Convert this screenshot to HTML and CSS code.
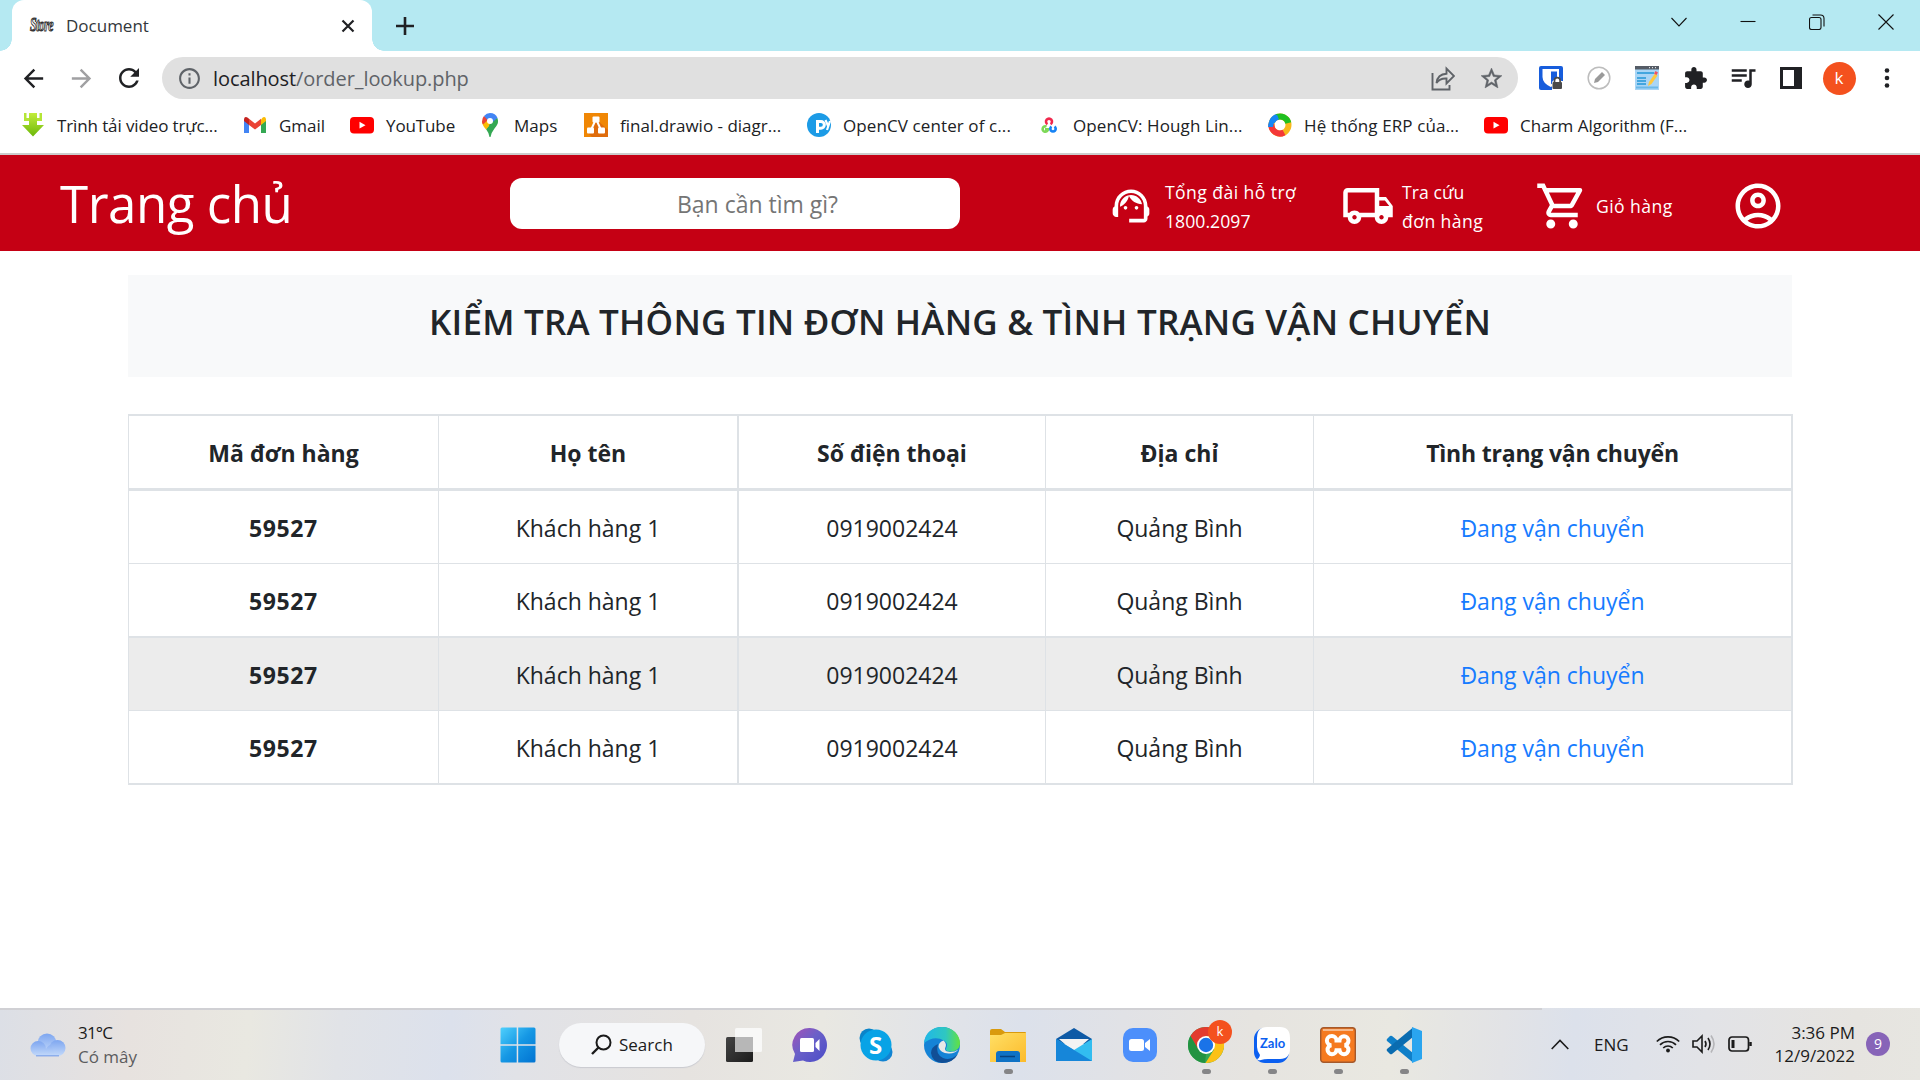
FILE: index.html
```html
<!DOCTYPE html>
<html lang="vi">
<head>
<meta charset="utf-8">
<title>Document</title>
<link rel="stylesheet" href="styles.css">
</head>
<body>
<header class="tabstrip">
  <div class="tab">
    <span class="favicon">Store</span>
    <span class="tab-title">Document</span>
    <svg class="tab-close" width="14" height="14" viewBox="0 0 14 14"><path d="M1.5 1.5l11 11m0-11l-11 11" stroke="#202124" stroke-width="2.2"/></svg>
  </div>
  <svg class="new-tab" width="20" height="20" viewBox="0 0 20 20"><path d="M10 1v18M1 10h18" stroke="#202124" stroke-width="2.6"/></svg>
  <div class="window-controls">
    <svg viewBox="0 0 16 16"><path d="M.5 4l7.500 8 7.500-8" /></svg>
    <svg viewBox="0 0 16 16"><path d="M.5 7.500h15"/></svg>
    <svg viewBox="0 0 16 16"><rect x=".5" y="3.500" width="11.500" height="12" rx="2"/><path d="M3.500 1h8q3.500 0 3.500 3.500v8"/></svg>
    <svg viewBox="0 0 16 16"><path d="M.5.5l15 15m0-15l-15 15"/></svg>
  </div>
</header>

<nav class="toolbar">
  <span class="tool"><svg width="29" height="29" viewBox="0 0 24 24"><path d="M20 11H7.830l5.590-5.590L12 4l-8 8 8 8 1.410-1.410L7.830 13H20v-2z" fill="#202124"/></svg></span>
  <span class="tool"><svg width="29" height="29" viewBox="0 0 24 24"><path d="M4 11h12.170l-5.590-5.590L12 4l8 8-8 8-1.410-1.410L16.170 13H4v-2z" fill="#a0a0a2"/></svg></span>
  <span class="tool"><svg width="30" height="30" viewBox="0 0 24 24"><path d="M17.650 6.350C16.200 4.900 14.210 4 12 4c-4.420 0-7.990 3.580-7.990 8s3.570 8 7.990 8c3.730 0 6.840-2.550 7.730-6h-2.080c-.82 2.330-3.040 4-5.650 4-3.310 0-6-2.690-6-6s2.690-6 6-6c1.660 0 3.140.69 4.220 1.780L13 11h7V4l-2.350 2.350z" fill="#202124"/></svg></span>
  <div class="address">
    <svg class="info" width="25" height="25" viewBox="0 0 24 24"><path d="M11 7h2v2h-2zm0 4h2v6h-2zm1-9C6.480 2 2 6.480 2 12s4.480 10 10 10 10-4.480 10-10S17.520 2 12 2zm0 18c-4.410 0-8-3.590-8-8s3.590-8 8-8 8 3.590 8 8-3.590 8-8 8z" fill="#5f6368"/></svg>
    <span class="url"><b>localhost</b>/order_lookup.php</span>
    <span class="tool"><svg width="24" height="26" viewBox="0 0 24 26" fill="none" stroke="#5f6368" stroke-width="1.900"><path d="M1.500 8v16.500h17V20"/><path d="M5.500 18q1-9 10-9.300V3.500L23 11l-7.500 7.500v-5Q9 13 5.500 18z"/></svg></span>
    <span class="tool"><svg width="25" height="25" viewBox="0 0 24 24"><path d="M22 9.240l-7.190-.62L12 2 9.190 8.630 2 9.240l5.460 4.730L5.820 21 12 17.270 18.180 21l-1.630-7.030L22 9.240zM12 15.400l-3.760 2.270 1-4.280-3.320-2.880 4.380-.38L12 6.100l1.710 4.040 4.380.38-3.320 2.880 1 4.280L12 15.400z" fill="#5f6368" stroke="#5f6368" stroke-width=".5"/></svg></span>
  </div>
  <div class="extensions">
    <span class="tool"><svg width="24" height="24" viewBox="0 0 24 24"><rect width="24" height="24" rx="2" fill="#175ddc"/><path d="M3.500 3H20v8q0 6-8.200 10Q3.500 17 3.500 11z" fill="#fff"/><path d="M12 5.500h6V11q0 4-6 7.300z" fill="#175ddc"/><path d="M13 24v-8l4.500-5 5 4H24v9z" fill="#fff"/><rect x="13.500" y="16" width="9.500" height="7" rx="1" fill="#4a4a4a"/><path d="M15.500 16v-1.500a2.800 2.800 0 0 1 5.600 0V16" stroke="#4a4a4a" stroke-width="1.700" fill="none"/></svg></span>
    <span class="tool"><svg width="24" height="24" viewBox="0 0 24 24"><circle cx="12" cy="12" r="10.800" fill="#fff" stroke="#bdbdbd" stroke-width="1.500"/><path d="M7 17l1-4 7-7 3 3-7 7z" fill="#9a9a9a"/></svg></span>
    <span class="tool"><svg width="24" height="24" viewBox="0 0 24 24"><path d="M0 0h24v24H0z" fill="#a9d5f5"/><path d="M0 0h24v3.500H0z" fill="#555c66"/><path d="M14 1.700h1m2 0h1m2 0h1" stroke="#fff"/><path d="M2 7h17M2 12h9M2 15h9M2 18h9" stroke="#2196d8" stroke-width="1.500"/><path d="M1 21.500h22" stroke="#6ab9e8" stroke-width="2"/><path d="M13 20l1-4 6-8.500 2.500 2-6 8.500z" fill="#ffc83d"/><path d="M19 7.500l1.500-2.500 2.500 1.500-1.500 2.500z" fill="#ef5362"/></svg></span>
    <span class="tool"><svg width="25" height="25" viewBox="0 0 24 24"><path d="M20.500 11H19V7c0-1.100-.9-2-2-2h-4V3.500C13 2.120 11.880 1 10.500 1S8 2.120 8 3.500V5H4c-1.100 0-1.990.9-1.990 2v3.800H3.500c1.490 0 2.700 1.210 2.700 2.700s-1.210 2.700-2.700 2.700H2V20c0 1.100.9 2 2 2h3.800v-1.500c0-1.490 1.210-2.700 2.700-2.700 1.490 0 2.700 1.210 2.700 2.700V22H17c1.100 0 2-.9 2-2v-4h1.500c1.380 0 2.500-1.120 2.500-2.500S21.880 11 20.500 11z" fill="#202124"/></svg></span>
    <span class="tool"><svg width="30" height="30" viewBox="0 0 24 24"><path d="M15 5H3v2h12V5zm0 4H3v2h12V9zM3 15h8v-2H3v2zM17 5v9.180c-.31-.11-.65-.18-1-.18-1.660 0-3 1.340-3 3s1.340 3 3 3 3-1.340 3-3V7h3V5h-5z" fill="#202124"/></svg></span>
    <span class="tool"><svg width="22" height="22" viewBox="0 0 22 22"><path fill-rule="evenodd" d="M0 0h22v22H0zM3 3v16h11V3z" fill="#202124"/></svg></span>
    <span class="tool"><span class="avatar">k</span></span>
    <span class="tool"><svg width="6" height="20" viewBox="0 0 6 20" fill="#202124"><circle cx="3" cy="2.500" r="2.300"/><circle cx="3" cy="10" r="2.300"/><circle cx="3" cy="17.500" r="2.300"/></svg></span>
  </div>
</nav>

<nav class="bookmarks">
  <a><svg viewBox="0 0 24 24"><defs><linearGradient id="dl" x2="0" y2="1"><stop stop-color="#c2ec3b"/><stop offset="1" stop-color="#6cb80a"/></linearGradient></defs><path d="M8 0h8v12h7L12 23.500 1 12h7z" fill="url(#dl)"/><path d="M3 0h2.500v5H8v3H3zM21 0h-2.500v5H16v3h5z" fill="#b4e636"/></svg><span class="tight">Trình tải video trực...</span></a>
  <a><svg viewBox="0 0 24 24"><path d="M1 6v14h5V11z" fill="#4285f4"/><path d="M23 6v14h-5V11z" fill="#34a853"/><path d="M18 6.500L20 4.300Q23 3 23 6.500V8l-5 4z" fill="#fbbc04"/><path d="M6 12V5.800l6 4.700 6-4.700V12l-6 4.600z" fill="#ea4335"/><path d="M1 8V6.500Q1 3 4 4.300L6 5.800V12z" fill="#c5221f"/></svg><span>Gmail</span></a>
  <a><svg viewBox="0 0 24 24"><rect y="4" width="24" height="16.500" rx="4" fill="#f00"/><path d="M9.500 8.800l6 3.400-6 3.400z" fill="#fff"/></svg><span class="tight">YouTube</span></a>
  <a><svg viewBox="0 0 24 24"><path d="M20 8q0 3.500-3.500 7.500Q13 20 12.500 24h-1Q11 20 8 16L18 4z" fill="#34a853"/><path d="M4 8.500q0 3.500 4 8l7-8-5-5z" fill="#fbbc04"/><path d="M6 3q-2 2-2 5.500 0 1.500 1 3L11 6z" fill="#ea4335"/><path d="M6 3q2.500-3 6-3 5.500 0 7.500 5L14 11 9.500 7z" fill="#4285f4"/><path d="M19.500 5q1 3-.3 6L13 18l-2-6z" fill="#34a853"/><circle cx="12" cy="8" r="3" fill="#fff"/></svg><span>Maps</span></a>
  <a><svg viewBox="0 0 24 24"><path d="M0 0h24v24H0z" fill="#f08705"/><path d="M12 6l12 11v7H8l-4-4z" fill="#df6c0c"/><path d="M12 6L7 17m5-11l5 11" stroke="#fff" stroke-width="2"/><rect x="8.500" y="3.500" width="7" height="6" rx="1" fill="#fff"/><rect x="3" y="14.500" width="7" height="6" rx="1" fill="#fff"/><rect x="14" y="14.500" width="7" height="6" rx="1" fill="#fff"/></svg><span>final.drawio - diagr...</span></a>
  <a><svg viewBox="0 0 24 24"><circle cx="12" cy="12" r="12" fill="#1c9be6"/><path d="M10.500 20V8.500H14a3.300 3.300 0 0 1 0 6.700h-3" fill="none" stroke="#fff" stroke-width="3"/><path d="M18.500 7l3 7M23 8l-3 9" stroke="#fff" stroke-width="2.200"/></svg><span class="loose">OpenCV center of c...</span></a>
  <a><svg viewBox="0 0 24 24" fill="none" stroke-width="2.600"><path d="M10.500 11.200a3 3 0 1 1 3 0" stroke="#f0274c"/><path d="M9.500 13.600a2.700 2.700 0 1 0 1.500 2.700H8" stroke="#7dd957"/><path d="M14.500 13.600a2.700 2.700 0 1 0 3 0" stroke="#1683f5"/></svg><span class="loose">OpenCV: Hough Lin...</span></a>
  <a><svg viewBox="0 0 24 24" fill="none" stroke-width="6"><circle cx="12" cy="12" r="8.500" stroke="#f7b81b"/><path d="M4 9a8.500 8.500 0 0 1 6-5.300" stroke="#1687f5"/><path d="M9 4a8.500 8.500 0 0 1 11.300 6" stroke="#1fc020"/><path d="M3.500 11A8.500 8.500 0 0 0 16 19.500" stroke="#f43838"/><path d="M2.500 14q0-7 7.500-10" stroke="#1687f5" stroke-width="5"/></svg><span class="loose">Hệ thống ERP của...</span></a>
  <a><svg viewBox="0 0 24 24"><rect y="4" width="24" height="16.500" rx="4" fill="#f00"/><path d="M9.500 8.800l6 3.400-6 3.400z" fill="#fff"/></svg><span>Charm Algorithm (F...</span></a>
</nav>

<section class="site-header">
  <a class="brand">Trang chủ</a>
  <div class="search">Bạn cần tìm gì?</div>
  <a class="action support"><svg width="44" height="44" viewBox="0 0 24 24"><path d="M21 12.220C21 6.730 16.740 3 12 3c-4.690 0-9 3.650-9 9.280-.6.34-1 .98-1 1.720v2c0 1.100.9 2 2 2h1v-6.100c0-3.870 3.130-7 7-7s7 3.130 7 7V19h-8v2h8c1.100 0 2-.9 2-2v-1.220c.59-.31 1-.92 1-1.640v-2.300c0-.7-.41-1.310-1-1.620z"/><circle cx="9" cy="13" r="1"/><circle cx="15" cy="13" r="1"/><path d="M18 11.030C17.520 8.180 15.040 6 12.050 6c-3.030 0-6.290 2.510-6.030 6.450 2.470-1.010 4.330-3.210 4.860-5.890 1.310 2.630 4 4.440 7.120 4.470z"/></svg><p><span class="wide">Tổng đài hỗ trợ</span><br><span class="digits">1800.2097</span></p></a>
  <a class="action lookup"><svg width="54" height="54" viewBox="0 0 24 24"><path d="M20 8h-3V4H3c-1.100 0-2 .9-2 2v11h2c0 1.660 1.340 3 3 3s3-1.340 3-3h6c0 1.660 1.340 3 3 3s3-1.340 3-3h2v-5l-3-4zm-.5 1.500l1.960 2.500H17V9.500h2.500zM6 18c-.55 0-1-.45-1-1s.45-1 1-1 1 .45 1 1-.45 1-1 1zm2.220-3c-.55-.61-1.330-1-2.220-1s-1.670.39-2.220 1H3V6h12v9H8.220zM18 18c-.55 0-1-.45-1-1s.45-1 1-1 1 .45 1 1-.45 1-1 1z"/></svg><p><span class="digits">Tra cứu</span><br><span class="wide">đơn hàng</span></p></a>
  <a class="action cart"><svg width="54" height="54" viewBox="0 0 24 24"><path d="M15.550 13c.75 0 1.410-.41 1.750-1.030l3.580-6.490c.37-.66-.11-1.480-.87-1.480H5.210l-.94-2H1v2h2l3.600 7.590-1.350 2.440C4.520 15.370 5.480 17 7 17h12v-2H7l1.100-2h7.450zM6.160 6h12.150l-2.760 5H8.530L6.160 6zM7 18c-1.100 0-1.990.9-1.990 2S5.900 22 7 22s2-.9 2-2-.9-2-2-2zm10 0c-1.100 0-1.990.9-1.990 2s.89 2 1.990 2 2-.9 2-2-.9-2-2-2z"/></svg><p><span class="wide">Giỏ hàng</span></p></a>
  <a class="action account"><svg width="54" height="54" viewBox="0 0 24 24"><path d="M12 2C6.480 2 2 6.480 2 12s4.480 10 10 10 10-4.480 10-10S17.520 2 12 2zM7.350 18.500C8.660 17.560 10.260 17 12 17s3.340.56 4.650 1.500C15.340 19.440 13.740 20 12 20s-3.340-.56-4.650-1.500zm10.790-1.380C16.450 15.800 14.320 15 12 15s-4.450.8-6.140 2.120C4.700 15.730 4 13.950 4 12c0-4.420 3.580-8 8-8s8 3.580 8 8c0 1.950-.7 3.730-1.860 5.120zM12 6c-1.930 0-3.500 1.570-3.500 3.500S10.070 13 12 13s3.500-1.570 3.500-3.500S13.930 6 12 6zm0 5c-.83 0-1.500-.67-1.500-1.500S11.170 8 12 8s1.500.67 1.500 1.500S12.830 11 12 11z"/></svg></a>
</section>

<main class="content">
  <div class="heading"><h1>KIỂM TRA THÔNG TIN ĐƠN HÀNG &amp; TÌNH TRẠNG VẬN CHUYỂN</h1></div>
  <table class="orders">
    <colgroup><col class="col-code"><col class="col-name"><col class="col-phone"><col class="col-address"><col class="col-status"></colgroup>
    <thead>
      <tr><th>Mã đơn hàng</th><th>Họ tên</th><th>Số điện thoại</th><th>Địa chỉ</th><th>Tình trạng vận chuyển</th></tr>
    </thead>
    <tbody>
      <tr><th>59527</th><td>Khách hàng 1</td><td>0919002424</td><td>Quảng Bình</td><td><a>Đang vận chuyển</a></td></tr>
      <tr><th>59527</th><td>Khách hàng 1</td><td>0919002424</td><td>Quảng Bình</td><td><a>Đang vận chuyển</a></td></tr>
      <tr class="hovered"><th>59527</th><td>Khách hàng 1</td><td>0919002424</td><td>Quảng Bình</td><td><a>Đang vận chuyển</a></td></tr>
      <tr><th>59527</th><td>Khách hàng 1</td><td>0919002424</td><td>Quảng Bình</td><td><a>Đang vận chuyển</a></td></tr>
    </tbody>
  </table>
</main>

<footer class="taskbar">
  <div class="weather">
    <svg width="36" height="24" viewBox="0 0 36 24"><defs><linearGradient id="cl" x2="0" y2="1"><stop stop-color="#7ea6f0"/><stop offset="1" stop-color="#c3d9fa"/></linearGradient></defs><circle cx="17" cy="10" r="9.500" fill="url(#cl)"/><circle cx="27.500" cy="15" r="8" fill="url(#cl)"/><path d="M8 8a8 8 0 0 1 8 8q2-4 5-4l5 11H8A7.500 7.500 0 0 1 8 8z" fill="url(#cl)"/><path d="M6 22.800h23" stroke="#7fa4ea" stroke-width="1.200"/></svg>
    <p><span class="temperature">31°C</span><br><span class="muted">Có mây</span></p>
  </div>
  <div class="apps">
    <span class="app"><svg width="36" height="36" viewBox="0 0 36 36"><defs><linearGradient id="wn" x2="1" y2="1"><stop stop-color="#4fd0fd"/><stop offset=".5" stop-color="#1597e4"/><stop offset="1" stop-color="#0173d2"/></linearGradient></defs><path d="M2 .5h14.700v16.800H.5V2Q.5.500 2 .5zM18.200.5H34q1.500 0 1.500 1.500v15.300H18.200zM.5 18.800h16.200v16.700H2Q.5 35.500.5 34zM18.200 18.800h17.300V34q0 1.500-1.500 1.500H18.200z" fill="url(#wn)"/></svg></span>
    <div class="task-search"><svg width="21" height="21" viewBox="0 0 21 21" fill="none" stroke="#1b1b1b" stroke-width="2"><circle cx="12.500" cy="8.500" r="7"/><path d="M7.500 13.500L1 20" stroke-width="2.400"/></svg><span>Search</span></div>
    <span class="app"><svg width="36" height="36" viewBox="0 0 36 36"><defs><linearGradient id="tv" x2="1" y2="1"><stop stop-color="#444"/><stop offset="1" stop-color="#1c1c1c"/></linearGradient></defs><rect y="10" width="27" height="25" rx="1.500" fill="url(#tv)"/><rect x="9" y="1" width="27" height="24" rx="1.500" fill="#fafafa" fill-opacity=".9"/><path d="M9 10h18v15H9z" fill="#b7b7b7"/></svg></span>
    <span class="app"><svg width="36" height="36" viewBox="0 0 36 36"><defs><linearGradient id="ch" x2="1" y2="1"><stop stop-color="#a552b8"/><stop offset=".45" stop-color="#6a60c8"/><stop offset="1" stop-color="#4a4cc8"/></linearGradient></defs><path d="M18 1a17 17 0 1 1-7 32.500L1 35l2-8A17 17 0 0 1 18 1z" fill="url(#ch)"/><rect x="8" y="11" width="14" height="14" rx="1.500" fill="#fff"/><path d="M23.500 16l4-4v12l-4-4z" fill="#fff"/></svg></span>
    <span class="app"><svg width="36" height="36" viewBox="0 0 36 36"><circle cx="11" cy="11" r="9.500" fill="#0a84c9"/><circle cx="25" cy="25" r="9.500" fill="#1183d2"/><circle cx="18" cy="18" r="15.500" fill="#08a3e6"/></svg><b class="skype-letter">S</b></span>
    <span class="app"><svg width="36" height="36" viewBox="0 0 36 36"><defs><linearGradient id="eg" x2="1"><stop stop-color="#20b7e8"/><stop offset=".6" stop-color="#2fc7c1"/><stop offset="1" stop-color="#62e23f"/></linearGradient></defs><circle cx="18" cy="18" r="18" fill="#1583d6"/><path d="M0 16C1 6 8 0 18 0c11 0 18 8 18 16 0 6-5 9-10 8.500-3 0-5-1.500-4-3q3-5-2-8Q10 8 0 16z" fill="url(#eg)"/><path d="M14 17q-3 10 5 14 8 3 15-4-5 9-16 9-10-1-11-10 0-6 7-9z" fill="#114f96"/><path d="M14.500 20q0-5 5-6.500 4 3.500 1.500 8-.5 3 5 3.500 5 0 8.500-2.500-4 4.500-10 4-8-.5-10-6.500z" fill="#e8e8e7"/></svg></span>
    <span class="app running"><svg width="36" height="36" viewBox="0 0 36 36"><defs><linearGradient id="fo" x2="1" y2="1"><stop stop-color="#ffdf65"/><stop offset="1" stop-color="#fcbb2b"/></linearGradient></defs><path d="M0 4q0-2 2-2h9l4 3h20q1 0 1 1v8H0z" fill="#d99a0d"/><path d="M0 8h11l4-2h21v29H0z" fill="url(#fo)"/><path d="M6 35V27q0-3 3-3h18q3 0 3 3v8z" fill="#0f72c5"/><path d="M10 29.500h15" stroke="#07427e" stroke-width="1.500"/></svg></span>
    <span class="app"><svg width="36" height="36" viewBox="0 0 36 36"><path d="M0 12L18 1l18 11v5H0z" fill="#0e5aa6"/><path d="M3 12h30L18 25z" fill="#f3f3f3"/><path d="M0 12l18 11 18-11v22H0z" fill="#32bdf0"/><path d="M0 12l36 22H0z" fill="#1686d9"/></svg></span>
    <span class="app"><svg width="36" height="36" viewBox="0 0 36 36"><rect x="1" y="1" width="34" height="34" rx="10" fill="#4c8ffb"/><rect x="7" y="12" width="15" height="12" rx="2.500" fill="#fff"/><path d="M23 16l5-4v12l-5-4z" fill="#fff"/></svg></span>
    <span class="app running"><svg width="36" height="36" viewBox="0 0 36 36"><circle cx="18" cy="18" r="18" fill="#34a853"/><path d="M2.400 9A18 18 0 0 1 33.600 9H18l-8 13z" fill="#e33b2e"/><path d="M2.400 9L10 22l8 5-1 9A18 18 0 0 1 2.400 9z" fill="#229342"/><path d="M33.600 9H18l8 13.500L17.500 36A18 18 0 0 0 33.600 9z" fill="#fbc116"/><circle cx="18" cy="18" r="9" fill="#fff"/><circle cx="18" cy="18" r="7.200" fill="#1a73e8"/></svg><span class="profile-badge">k</span></span>
    <span class="app running"><svg width="36" height="36" viewBox="0 0 36 36"><rect y="1" width="35" height="35" rx="11" fill="#0b5ff0"/><path d="M13 0h13q10 0 10 11v10q0 11-10 11H14q-4 0-7 1-3 1-4-1 2 0 3-4-3-4-3-8V11Q3 0 13 0z" fill="#fff"/></svg><b class="zalo-name">Zalo</b></span>
    <span class="app running"><svg width="36" height="36" viewBox="0 0 36 36"><rect x=".7" y=".7" width="34.600" height="34.600" rx="3" fill="#f57a20" stroke="#a5592b" stroke-width="1.400"/><path d="M3 3h30" stroke="#f6b98b" stroke-width="2"/><path d="M11.500 9a4.500 4.500 0 0 1 5 4.500h3a4.500 4.500 0 1 1 5 4.700 4.500 4.500 0 1 1-5 5h-3a4.500 4.500 0 1 1-5-5 4.500 4.500 0 1 1 0-9.200z" fill="none" stroke="#fff" stroke-width="4"/></svg></span>
    <span class="app running"><svg width="36" height="36" viewBox="0 0 36 36"><path d="M1 12l3-3q1-.6 2 0l21 17v9.500L1 14q-.7-1 0-2z" fill="#0f7fc8"/><path d="M1 24l3 3q1 .6 2 0L27 10V.5L1 22q-.7 1 0 2z" fill="#0a6cb0"/><path d="M26 0l10 4v28l-10 4z" fill="#2aa5ef"/></svg></span>
  </div>
  <div class="tray">
    <svg class="tray-up" width="18" height="11" viewBox="0 0 18 11"><path d="M.7 10L9 1.500l8.300 8.500" fill="none" stroke="#1b1b1b" stroke-width="1.600"/></svg>
    <span class="lang">ENG</span>
    <svg class="wifi" width="24" height="18" viewBox="0 0 24 18" fill="none" stroke="#1b1b1b" stroke-width="1.700"><path d="M.8 6.500a15.800 15.800 0 0 1 22.400 0M4 9.800a11.300 11.300 0 0 1 16 0M7.200 13a6.800 6.800 0 0 1 9.600 0"/><circle cx="12" cy="15.500" r="1.900" fill="#1b1b1b" stroke="none"/></svg>
    <svg class="volume" width="24" height="20" viewBox="0 0 24 20" fill="none" stroke="#1b1b1b" stroke-width="1.600"><path d="M1 7h4l5-5v16l-5-5H1z"/><path d="M13 7q2 3 0 6M16 4q4 6 0 12"/><path d="M19 1.500q6 8.500 0 17" stroke="#b5b5b8"/></svg>
    <svg class="battery" width="24" height="16" viewBox="0 0 24 16" fill="none" stroke="#1b1b1b" stroke-width="1.700"><rect x="1" y="1" width="19.500" height="14" rx="3"/><path d="M3.500 4h3v8h-3z" fill="#1b1b1b" stroke="none"/><path d="M22.500 6v4" stroke-width="2.500"/></svg>
    <p class="clock"><span>3:36 PM</span><br><span>12/9/2022</span></p>
    <span class="count">9</span>
  </div>
</footer>
</body>
</html>
```
FILE: styles.css
```css
* { box-sizing: border-box; }
body {
  margin: 0;
  width: 1920px;
  height: 1080px;
  display: flex;
  flex-direction: column;
  overflow: hidden;
  background: #fff;
  color: #212529;
  font-family: "Open Sans", "Noto Sans", sans-serif;
}
p, h1 { margin: 0; }
svg { display: block; flex: none; }
span, a { white-space: nowrap; }

/* browser tab strip */
.tabstrip {
  height: 51px;
  flex: none;
  display: flex;
  background: #b5e9f2;
  padding-left: 12px;
}
.tab {
  width: 360px;
  display: flex;
  align-items: center;
  padding: 0 17px 0 18px;
  background: #fff;
  border-radius: 12px 12px 0 0;
  position: relative;
}
.tab::before, .tab::after {
  content: "";
  position: absolute;
  bottom: 0;
  width: 12px;
  height: 12px;
}
.tab::before { left: -12px; background: radial-gradient(circle at 0 0, transparent 11.5px, #fff 12px); }
.tab::after { right: -12px; background: radial-gradient(circle at 100% 0, transparent 11.5px, #fff 12px); }
.favicon {
  width: 24px;
  font: italic bold 12px "Liberation Serif", serif;
  letter-spacing: -.6px;
  color: #fff;
  -webkit-text-stroke: .7px #333;
  transform: scaleY(1.6);
}
.tab-title { margin-left: 12px; font-size: 17px; color: #33373b; }
.tab-close { margin-left: auto; }
.new-tab { align-self: center; margin-left: 23px; }
.window-controls { margin-left: auto; width: 275px; height: 43px; display: flex; }
.window-controls svg { width: 16px; height: 16px; margin: 14px 26.4px; fill: none; stroke: #111; stroke-width: 1.1; }

/* browser toolbar */
.toolbar { height: 54px; flex: none; display: flex; align-items: center; padding-left: 9px; }
.tool { width: 48px; flex: none; display: flex; justify-content: center; align-items: center; }
.address {
  width: 1356px;
  height: 42px;
  margin-left: 9px;
  display: flex;
  align-items: center;
  padding: 0 3px 0 15px;
  border-radius: 21px;
  background: #e0e0e0;
}
.url { margin: 0 auto 0 11px; font-size: 20px; letter-spacing: -.08px; color: #5f6368; }
.url b { font-weight: 400; color: #202124; }
.extensions { margin-left: 9px; display: flex; }
.avatar {
  width: 33px;
  height: 33px;
  border-radius: 50%;
  background: #f4511e;
  color: #fff;
  font-size: 17px;
  line-height: 32px;
  text-align: center;
}

/* bookmarks bar */
.bookmarks {
  height: 50px;
  flex: none;
  display: grid;
  grid-template-columns: 222px 107px 128px 106px 223px 230px 231px 216px auto;
  align-items: center;
  padding: 0 0 8px 21px;
  border-bottom: 2px solid #ccc;
  font-size: 17px;
  color: #202124;
}
.bookmarks a { display: flex; align-items: center; gap: 12px; }
.bookmarks svg { width: 24px; height: 24px; }
.tight { letter-spacing: -.12px; }
.loose { letter-spacing: .1px; }

/* site header */
.site-header {
  height: 96px;
  flex: none;
  display: flex;
  align-items: center;
  padding-left: 60px;
  background: #c50014;
  color: #fff;
}
.brand { width: 450px; font-size: 51px; letter-spacing: -.45px; line-height: 96px; }
.search {
  width: 450px;
  height: 51px;
  padding: 1px 0 0 45px;
  border-radius: 12px;
  background: #fff;
  color: #757575;
  font-size: 23px;
  line-height: 51px;
  text-align: center;
}
.action { display: flex; align-items: center; padding-top: 5px; font-size: 17.6px; line-height: 29px; }
.action svg { fill: #fff; }
.action p { padding-top: 2px; }
.wide { letter-spacing: .42px; }
.digits { letter-spacing: .05px; }
.support { width: 232px; margin-left: 149px; gap: 12px; }
.lookup { width: 194px; gap: 7px; }
.cart { width: 196px; gap: 7px; }

/* page content */
.content { flex: 1; padding: 24px 127px 0 128px; }
.heading { width: 1664px; height: 102px; padding-top: 22px; background: #f8f9fa; text-align: center; }
.heading h1 { font-size: 35px; letter-spacing: .21px; line-height: 50px; font-weight: 600; }
.orders {
  width: 1665px;
  margin-top: 37px;
  table-layout: fixed;
  border-collapse: separate;
  border-spacing: 0;
  font-size: 23px;
  line-height: 36px;
  text-align: center;
}
.col-code { width: 311px; }
.col-name { width: 300px; }
.col-phone { width: 307px; }
.col-address { width: 268px; }
.col-status { width: 479px; }
.orders th, .orders td { height: 73px; padding: 2px 0 0; border: 0 solid #dee2e6; border-width: 0 1px 1px 0; }
.orders tr > :first-child { border-left-width: 1px; }
.orders tr > :nth-child(2), .orders tr > :last-child { border-right-width: 2px; }
.orders thead th { height: 77px; border-top-width: 2px; border-bottom-width: 3px; }
.orders thead th:last-child { letter-spacing: -.2px; }
.orders tbody th { letter-spacing: .6px; }
.orders tbody tr:nth-child(even) > * { height: 74px; border-bottom-width: 2px; }
.orders .hovered { background: #ececec; }
.orders a { color: #167bff; }

/* desktop taskbar */
.taskbar {
  height: 72px;
  flex: none;
  display: flex;
  position: relative;
  background: linear-gradient(95deg, #dcdfe6 0, #e7e2df 130px, #e9e8e1 250px, #e1e3e7 340px, #dce1ec 450px, #e1e2e7 520px, #e6e3e0 690px, #e9e8e2 820px, #e2e4e8 930px, #dce1eb 1020px, #e1e2e6 1120px, #e6e4e0 1250px, #e9e8e1 1390px, #e2e3e6 1500px, #dce1eb 1570px, #e2e3e7 1700px, #e6e4e0 1850px, #e7e6e1 1920px);
  color: #1b1b1b;
}
.taskbar::before { content: ""; position: absolute; left: 0; top: 0; width: 1542px; height: 2px; background: #d0d0d4; }
.weather { width: 485px; display: flex; padding-left: 30px; gap: 12px; font-size: 17px; line-height: 24px; }
.weather svg { margin-top: 25px; }
.weather p { margin-top: 13px; }
.temperature { letter-spacing: -.8px; }
.muted { color: #5c5c5e; }
.apps { display: flex; align-items: center; }
.app { width: 66px; height: 72px; display: grid; place-items: center; position: relative; padding-top: 2px; }
.running::after {
  content: "";
  position: absolute;
  left: 29px;
  bottom: 6px;
  width: 9px;
  height: 5px;
  border-radius: 3px;
  background: #858587;
}
.task-search {
  width: 146px;
  height: 44px;
  margin: 1px 6px 0 8px;
  display: flex;
  align-items: center;
  gap: 7px;
  padding-left: 32px;
  border-radius: 22px;
  background: #f6f7f9;
  box-shadow: 0 1px 1px #c9cad0;
  font-size: 17px;
}
.skype-letter { position: absolute; top: 19px; left: 26px; font-size: 24px; line-height: 36px; color: #fff; }
.zalo-name { position: absolute; top: 23px; left: 21px; font: bold 13px/24px "Lato", sans-serif; color: #0b5ff0; }
.profile-badge {
  position: absolute;
  top: 12px;
  left: 35px;
  width: 24px;
  height: 24px;
  border-radius: 50%;
  background: #f4511e;
  color: #fff;
  font-size: 13px;
  line-height: 23px;
  text-align: center;
}
.tray { flex: 1; display: flex; align-items: center; justify-content: flex-end; padding-right: 30px; font-size: 17px; }
.lang { width: 34px; margin: 0 28px 0 25px; }
.wifi { margin-right: 12px; }
.volume { margin-right: 12px; }
.clock { width: 81px; margin: 0 11px 0 22px; line-height: 23px; text-align: right; }
.count {
  width: 24px;
  height: 24px;
  border-radius: 50%;
  background: #8764b8;
  color: #fff;
  font-size: 14px;
  line-height: 23px;
  text-align: center;
}
```
